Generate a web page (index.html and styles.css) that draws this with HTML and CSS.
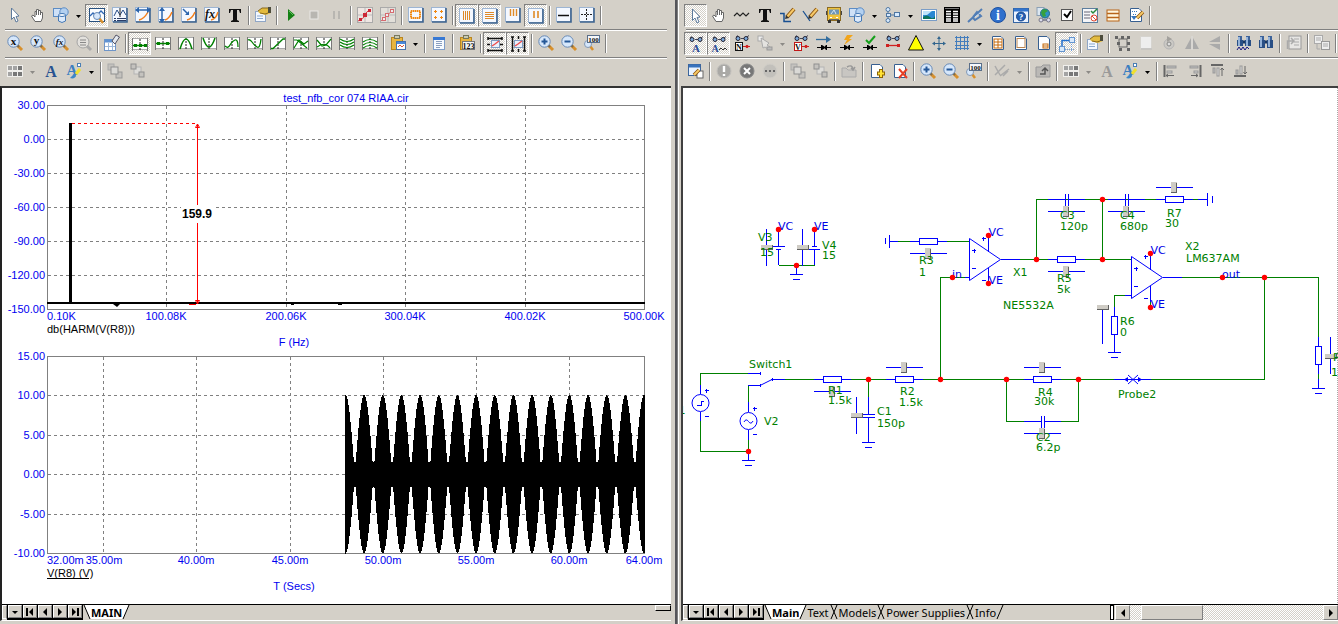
FILE: index.html
```html
<!DOCTYPE html>
<html lang="en">
<head>
<meta charset="utf-8">
<title>test_nfb_cor 074 RIAA.cir</title>
<link rel="stylesheet" href="styles.css">
</head>
<body>
<main class="workspace">
  <section class="pane pane-analysis" aria-label="Analysis">
    <div class="toolbars">
      <div class="toolbar" role="toolbar" data-bar="a1"></div>
      <div class="toolbar" role="toolbar" data-bar="a2"></div>
      <div class="toolbar" role="toolbar" data-bar="a3"></div>
    </div>
    <div class="document">
      <svg class="canvas plots" id="plots" viewBox="2 88 669 516" role="img" aria-label="Harmonic and transient plots"></svg>
      <div class="tabbar">
        <span class="grip"></span>
        <div class="nav" data-nav></div>
        <svg class="edge" viewBox="0 0 8 14"><path class="fill" d="M1 0H8V14H7z"/><path d="M1 0L7 14"/></svg>
        <button class="tab active">MAIN</button>
        <svg class="edge" viewBox="0 0 8 14"><path class="fill" d="M0 0H7L1 14H0z"/><path d="M7 0L1 14"/></svg>
        <span class="stretch"></span>
        <span class="split-handle"></span>
      </div>
    </div>
  </section>
  <div class="divider"></div>
  <section class="pane pane-schematic" aria-label="Schematic">
    <div class="toolbars">
      <div class="toolbar" role="toolbar" data-bar="s1"></div>
      <div class="toolbar" role="toolbar" data-bar="s2"></div>
      <div class="toolbar" role="toolbar" data-bar="s3"></div>
    </div>
    <div class="document">
      <svg class="canvas schematic" id="schematic" viewBox="683 88 655 516" role="img" aria-label="Circuit schematic"></svg>
      <div class="tabbar">
        <span class="grip"></span>
        <div class="nav" data-nav></div>
        <svg class="edge" viewBox="0 0 8 14"><path class="fill" d="M1 0H8V14H7z"/><path d="M1 0L7 14"/></svg>
        <button class="tab active">Main</button>
        <svg class="edge" viewBox="0 0 8 14"><path class="fill" d="M0 0H7L1 14H0z"/><path d="M7 0L1 14"/></svg>
        <button class="tab">Text</button>
        <svg class="edge wide" viewBox="0 0 10 14"><path d="M8 0L2 14M2 0L8 14"/></svg>
        <button class="tab">Models</button>
        <svg class="edge wide" viewBox="0 0 10 14"><path d="M8 0L2 14M2 0L8 14"/></svg>
        <button class="tab">Power Supplies</button>
        <svg class="edge wide" viewBox="0 0 10 14"><path d="M8 0L2 14M2 0L8 14"/></svg>
        <button class="tab">Info</button>
        <svg class="edge" viewBox="0 0 8 14"><path d="M7 0L1 14"/></svg>
        <span class="stretch"></span>
        <span class="scroll-split"></span>
        <div class="scrollbar">
          <button class="arrow" aria-label="Scroll left"><svg viewBox="0 0 8 8"><path d="M6 0V8L2 4z"/></svg></button>
          <span class="track"><span class="thumb"></span></span>
          <button class="arrow" aria-label="Scroll right"><svg viewBox="0 0 8 8"><path d="M2 0V8L6 4z"/></svg></button>
        </div>
      </div>
    </div>
  </section>
</main>
<script src="app.js"></script>
</body>
</html>
```

FILE: styles.css
```css
* { box-sizing: border-box; }
body {
  margin: 0;
  background: #d4d0c8;
  color: #000;
  font-family: "Liberation Sans", Arial, sans-serif;
  font-size: 11px;
}
button { margin: 0; padding: 0; border: 0; background: none; color: inherit; font: inherit; }
.workspace { display: grid; grid-template-columns: 675fr 4px 659fr; min-height: 100vh; }
.pane { min-width: 0; display: flex; flex-direction: column; background: #d4d0c8; overflow: hidden; }
.divider { border-left: 2px solid #55555a; border-right: 1px solid #fff; background: #808080; }

.toolbars { padding: 1px 8px 0 3px; height: 86px; }
.pane-schematic .toolbars { padding-left: 5px; padding-right: 0; }
.toolbar {
  display: flex;
  align-items: center;
  height: 28px;
  position: relative;
}
.toolbar:not(:last-child)::after {
  content: "";
  position: absolute;
  left: 2px;
  right: 0;
  bottom: -2px;
  height: 2px;
  background: linear-gradient(#808080 50%, #fff 50%);
}
.tool {
  flex: none;
  display: grid;
  place-items: center;
  width: 23px;
  height: 23px;
  border: 1px solid transparent;
}
.tool svg { display: block; width: 16px; height: 16px; overflow: visible; }
.tool.pressed {
  padding: 1px 0 0 1px;
  border-color: #808080 #fff #fff #808080;
  background: repeating-conic-gradient(#fff 0 25%, #d4d0c8 0 50%) 0 0 / 2px 2px;
}
.caret { flex: none; display: grid; place-items: center; width: 13px; height: 23px; }
.caret svg { width: 5px; height: 3px; margin-top: 2px; }
.sep { flex: none; width: 2px; height: 19px; margin: 0 1px 0 2px; border-left: 1px solid #808080; border-right: 1px solid #fff; }

.document { display: flex; flex-direction: column; margin: 0 4px 2px 0; border-top: 2px solid #333; border-left: 2px solid #222; border-bottom: 1px solid #fff; }
.pane-schematic .document { margin: 0 0 2px 2px; border-color: #404040 #fff #fff #404040; }
.canvas { display: block; width: 100%; height: auto; background: #fff; font-size: 11px; }
.canvas line, .canvas rect, .canvas polyline { shape-rendering: crispEdges; }

.plots text { fill: #0000f0; }
.plots .trace-name { fill: #000; }
.plots .measure { fill: #000; font-size: 12px; font-weight: bold; }
.frame { fill: none; stroke: #808080; }
.grid { stroke: #808080; stroke-dasharray: 3 3; }
.marker { stroke: #f00; fill: none; }

.schematic { font-family: "DejaVu Sans", Verdana, sans-serif; }
.schematic text { fill: #008000; }
.schematic .net { fill: #0000e6; }
.wire { fill: none; stroke: #008000; }
.part { fill: none; stroke: #00f; }
.body { fill: #fff; stroke: #00f; }
.dot { fill: #f00; }
.knob { fill: #cfccc5; }
.knob-edge { fill: none; stroke: #606060; }
.canvas .edge-strip { stroke: #a8a8a8; stroke-dasharray: 1 1; }

.tabbar { display: flex; height: 16px; border-top: 1px solid #000; background: #d4d0c8; font-family: "Noto Sans", Tahoma, sans-serif; }
.grip { flex: none; width: 5px; height: 14px; border: 1px solid #fff; border-right-color: #808080; }
.nav { flex: none; display: flex; gap: 1px; padding: 0 1px; background: #000; }
.nav button { width: 14px; height: 13px; border: 1px solid; border-color: #fff #808080 #808080 #fff; background: #d4d0c8; display: grid; place-items: center; }
.nav svg { width: 8px; height: 8px; }
.edge { flex: none; display: block; width: 8px; height: 14px; fill: none; stroke: #000; }
.edge.wide { width: 10px; }
.edge .fill { fill: #fff; stroke: none; }
.tab { flex: none; height: 14px; padding: 0; line-height: 13px; font-size: 11px; white-space: nowrap; }
.tab.active { background: #fff; font-weight: bold; }
.stretch { flex: 1; }
.split-handle { width: 16px; height: 6px; border: 1px solid; border-color: #fff #000 #000 #fff; background: #d4d0c8; }
.scroll-split { width: 4px; border: 1px solid #000; background: #fff; margin-right: 1px; }
.scrollbar { flex: 0 1 34%; display: flex; }
.arrow { flex: none; width: 15px; height: 15px; border: 1px solid; border-color: #fff #808080 #808080 #fff; display: grid; place-items: center; background: #d4d0c8; }
.arrow svg { width: 8px; height: 8px; }
.track { flex: 1; padding-left: 5%; background: repeating-conic-gradient(#fff 0 25%, #d4d0c8 0 50%) 0 0 / 2px 2px; }
.thumb { display: block; width: 34%; height: 15px; background: #d4d0c8; border: 1px solid; border-color: #fff #808080 #808080 #fff; }
```

FILE: app.js
```js
const p = (d, stroke, w = 1, fill = 'none') => `<path d="${d}" stroke="${stroke}" stroke-width="${w}" fill="${fill}"/>`;
const f = (d, fill) => `<path d="${d}" fill="${fill}"/>`;
const box = (x, y, w, h, fill, stroke = 'none') => `<rect x="${x}" y="${y}" width="${w}" height="${h}" fill="${fill}" stroke="${stroke}"/>`;
const ring = (x, y, r, fill, stroke) => `<circle cx="${x}" cy="${y}" r="${r}" fill="${fill}" stroke="${stroke}"/>`;
const glyph = (t, x, y, size, fill, extra = '') => `<text x="${x}" y="${y}" font-size="${size}" fill="${fill}" text-anchor="middle" font-family="Liberation Serif, serif" font-weight="bold" ${extra}>${t}</text>`;

const panel = box(.5, .5, 14, 14, '#f4f8ff', '#9db5d3') + p('M1 15H15V1', '#3d638f', 1.6);
const wave = box(.5, 2.5, 15, 11, '#fff', '#aaa') + p('M.5 2V15M15.5 2V15', '#777') + `<path d="M8 3V14" stroke="#222" stroke-dasharray="2 1"/>`;
const lens = (inner) => p('M10 10L15 15', '#d8902c', 3) + p('M10 10L12 12', '#7a6a50', 2) + ring(6.5, 6.5, 5.7, '#d6e7fb', '#6789b5') + inner;
const clip = box(1.5, 2.5, 11, 12, '#e8b541', '#b98520') + box(4.5, .5, 5, 3, '#c9c9b0', '#77775a');
const pencil = p('M7 10L14 2', '#8a5410', 4) + p('M7 10L14 2', '#f7c967', 2) + f('M5 12l1-4 3 3z', '#333');
const specs = p('M2 2L4 .5M15 .5L13 2M7 3.5H10', '#445') + ring(4, 3.5, 2, '#7eaadb', '#223') + ring(12, 3.5, 2, '#7eaadb', '#223');
const diode = p('M1 12.5H15M10.5 10V15M5.5 10V15', '#000') + f('M6 10L10 12.5L6 15zM10 10L8 12.5L10 15z', '#000');
const page = (x) => f('M2 1H11L14 4V15H2z', '#fff') + p('M2.5 1.5H11L13.5 4V14.5H2.5z', '#375f90') + x;
const shapes = box(.5, 1.5, 9, 8, '#cfe1f7', '#5c8cc4') + ring(11, 5, 4.2, '#b3d0f0', '#5c8cc4') + f('M5.500 8V14Q9 17 12.500 14V8z', '#dceafb') + p('M5.500 8V14Q9 17 12.500 14V8', '#4377b4') + `<ellipse cx="9" cy="8" rx="3.500" ry="1.500" fill="#f4f9ff" stroke="#4377b4"/>`;
const gridIcon = box(0, 2, 16, 12, '#f0efec') + [0, 1, 2].map(i => [0, 1].map(j => box(1 + i * 5, 3 + j * 5 + j, 4, 4, (i + j) > 1 ? '#777' : '#a3a3a3')).join('')).join('');
const colored = glyph('A', 6, 12, 15, '#3d7fc0') + box(11.500, .5, 3, 3, '#fff', '#4a7fb5') + p('M10 11L14 6', '#f0e02e', 3) + f('M4 15C7 16 10 15 10 12L8 11z', '#3c87c8');
const props = box(.5, 4.5, 10, 10, '#f3f8ff', '#8fa6c6') + p('M2 9H8M2 11.5H8', '#8ba9cf') + f('M3 4L7 1H13L16 0V6L11 8L7 7L4 6z', '#e3bb3f') + p('M3 4L7 1H13M5 6L10 7L13 6', '#8a6a1d') + box(13, 0, 3, 6, '#4c4c3c');
const binocs = box(2, 1, 4, 4, '#3d639a') + box(10, 1, 4, 4, '#3d639a') + box(1, 5, 6, 8, '#294f85') + box(9, 5, 6, 8, '#294f85') + p('M3 2V12M11 2V12', '#b6d2f2', 1.5) + p('M7 7H9', '#183762', 3);

const I = {
  arrow: f('M4.500 1L12 9L9 9.500L11 14L9 15L7 10L4.500 12.500z', '#fff') + p('M4.500 1L12 9L9 9.500L11 14L9 15L7 10L4.500 12.500z', '#5e7b9d'),
  hand: p('M5 14.500L1.500 9L3 8L5 10V4.500H6.500V8V2.500H8.500V8V3.500H10.500V8V5.500H12.500V11L11 14.500z', '#666', 1, '#fff'),
  shapes,
  zoombox: box(.5, .5, 15, 13, '#f9fcff', '#27507f') + p('M1 8L4 5L7 8L12 3L15 6', '#2f67b4', 1.3) + p('M10 10L14 15', '#d8902c', 2.500) + ring(8, 8, 3.500, '#d6e7fb', '#6789b5'),
  wavelist: panel + p('M2 9L5 3L8 8L11 3L14 8', '#284d85') + p('M8 1V10', '#222') + p('M2 11.500H4M5 11.500H14M2 13.500H4M5 13.500H14', '#2a3c66'),
  xscale: panel + p('M4 13Q9 12 13 5', '#f4801c', 1.500) + p('M2 3H14', '#2a64ad', 1.500) + f('M0 3L4 0V6zM16 3L12 0V6z', '#2a64ad'),
  yscale: panel + p('M7 13Q11 12 14 5', '#f4801c', 1.500) + p('M4 3V13', '#2a64ad', 1.500) + f('M4 0L7 4H1zM4 16L7 12H1z', '#2a64ad'),
  corner: panel + p('M6 13Q11 12 14 5', '#f4801c', 1.500) + p('M2 2L7 7', '#2a64ad', 1.500) + f('M8 4V8H4z', '#2a64ad'),
  fx: panel + p('M7 13Q12 12 14 5', '#f4801c', 1.500) + glyph('fx', 6, 11, 12, '#111', 'font-style="italic"'),
  text: f('M2 2H14V6H13L12 3H10V13L12 14V15H4V14L6 13V3H4L3 6H2z', '#101010'),
  props,
  run: f('M5 2L12 8L5 14z', '#138013') + p('M6 4L10 8', '#61bb61'),
  stop: box(4, 4, 8, 8, '#b8b6b1', '#e9e8e5'),
  pause: box(4, 4, 2, 8, '#b8b6b1') + box(9, 4, 2, 8, '#b8b6b1'),
  points: box(.5, .5, 15, 15, '#eee6e2', '#aaa') + p('M8 1V15M1 8H15', '#bbb') + p('M1 14Q7 12 8 8T14 3', '#d93a45') + box(6, 6, 4, 4, '#cc2735') + box(11, 2, 3, 3, '#cc2735') + box(2, 11, 3, 3, '#cc2735'),
  pointsOpen: box(.5, .5, 15, 15, '#e2dfd9', '#aaa') + p('M8 1V15M1 8H15', '#bbb') + p('M1 14L14 2', '#d66a70') + box(5.500, 6.500, 3, 3, '#eee', '#d66a70') + box(10.500, 2.500, 3, 3, '#eee', '#d66a70') + box(2.500, 10.500, 3, 3, '#eee', '#d66a70'),
  square: panel + box(3, 4, 9, 7, 'none', '#f18811') + `<rect x="3" y="4" width="9" height="7" fill="none" stroke="#f18811" stroke-width="2" stroke-dasharray="1 1"/>`,
  plus4: panel + p('M3 4.500H6M4.500 3V6M9 4.500H12M10.500 3V6M3 10.500H6M4.500 9V12M9 10.500H12M10.500 9V12', '#f18811'),
  bars4: panel + p('M4.500 3V12M6.500 3V12M8.500 3V12M10.500 3V12', '#df8a27'),
  rows4: panel + p('M3 4.500H12M3 6.500H12M3 8.500H12M3 10.500H12', '#df8a27'),
  bars3: panel + p('M5.500 2V9M8.500 2V9M11.500 2V9', '#df8a27', 1.400),
  bars2: panel + p('M6 3V10M10 3V10', '#df8a27', 1.600),
  hline: panel + p('M2 8.500H13', '#111', 1.500),
  cross: panel + `<path d="M2 7.500H14M7.500 2V13" stroke="#222" stroke-dasharray="2 1"/>`,
  zx: lens(glyph('x', 6.500, 10, 11, '#111')), zy: lens(glyph('y', 6.500, 9, 11, '#111')), zf: lens(glyph('fx', 6.500, 10, 9, '#111', 'font-style="italic"')),
  zeq: p('M10 10L15 15', '#aaa', 3) + ring(7, 7, 6, '#e3e1dd', '#a5a5a5') + p('M4 5H10M4 7.500H10M4 10H10', '#888'),
  eraser: box(.5, 4.500, 11, 11, '#fff', '#6f95c8') + p('M1 6H11', '#5f92d2', 3) + p('M4.500 8V15M8.500 8V15M1 11.500H11', '#9cb8da') + f('M8 6L12 0L16 2L11 9z', '#e3e8ee') + p('M8 6L12 0L15.500 2L11 9z', '#556'),
  c1: wave + p('M1 9.500H15', '#008000', 1.500) + box(2, 8, 3, 3, '#008000') + box(7, 8, 3, 3, '#008000') + box(12, 8, 3, 3, '#008000'),
  c2: wave + p('M1 8.500H15', '#008000', 1.500) + box(2, 7, 3, 3, '#008000') + box(11, 7, 3, 3, '#008000'),
  c3: wave + p('M2 14Q5 4 8 4T14 14', '#008000', 1.500),
  c4: wave + p('M2 3Q5 12 8 12T14 3', '#008000', 1.500),
  c5: wave + p('M1 11Q4 14 6 10T11 5T14 12', '#008000', 1.300),
  c6: wave + p('M1 5Q3 4 5 7T10 12T14 4', '#008000', 1.300),
  c7: wave + p('M1 13.500H3L13 4H15', '#008000', 1.300),
  c8: wave + p('M1 5H4L14 13M1 13L6 5L11 9L15 6', '#008000', 1.200),
  c9: wave + p('M1 5L6 11L10 10L15 4M1 12Q9 6 14 13', '#008000', 1.200),
  c10: wave + p('M1 4Q8 9 15 4M1 7Q8 12 15 7M1 10Q8 15 15 10', '#008000', 1.200),
  c11: wave + p('M1 7Q8 2 15 7M1 10Q8 5 15 10M1 13Q8 8 15 13', '#008000', 1.200),
  clipwave: clip + box(6.500, 6.500, 9, 8, '#fff', '#4672ae') + p('M7 8H15', '#4c8adb', 2) + p('M8 12L10 10L12 12L14 10', '#dc5635'),
  list: box(2.500, 2.500, 11, 12, '#f7fbff', '#7e9dc8') + p('M2 3.500H14', '#3879d4', 3) + p('M5 6.500H11M5 8.500H11M5 10.500H11M5 12.500H9', '#8a9fc0'),
  clip123: clip + box(3.500, 6.500, 12, 8, '#f4f4f4', '#777') + glyph('123', 9.500, 14, 8, '#111'),
  fith: p('M1 2.500H15M1 14.500H15M1 1V4M15 1V4M1 13V16M15 13V16M0 8.500H3M13 8.500H16', '#111', 1.500) + box(4.500, 4.500, 8, 7, '#eaf1fc', '#7e9cc2') + p('M5 10L8 8L12 5', '#ef4f4f', 1.500),
  fitv: p('M2.500 1V15M14.500 1V15M1 1H4M13 1H16M1 15H4M13 15H16M8.500 0V3M8.500 13V16', '#111', 1.500) + box(4.500, 4.500, 8, 7, '#eaf1fc', '#7e9cc2') + p('M5 10L8 8L12 5', '#ef4f4f', 1.500),
  zin: lens(p('M3.500 6.500H9.500M6.500 3.500V9.500', '#245797', 2)), zout: lens(p('M3.500 6.500H9.500', '#245797', 2)),
  z100: p('M6 11L9 15', '#d8902c', 2.500) + ring(4, 9, 3.500, '#d6e7fb', '#8298b5') + box(3.500, .5, 12, 7, '#f5f8fc', '#5a6e88') + glyph('100', 9.500, 7, 7, '#111'),
  grid: gridIcon, fontA: glyph('A', 8, 14, 16, '#285291'), fontAgray: glyph('A', 8, 14, 16, '#999'), colored,
  front: box(1, 1, 6, 6, '#c4c2be', '#aaa') + box(9, 9, 6, 6, '#c4c2be', '#999') + box(4, 4, 7, 7, '#dad9d6', '#8f8f8f'),
  back: box(4, 4, 7, 7, '#dddcd9', '#b4b4b4') + box(1, 1, 5, 5, '#c4c2be', '#8f8f8f') + box(9, 9, 5, 5, '#c4c2be', '#8f8f8f'),
  zigzag: p('M0 9L3 6L6 9L9 6L12 9L15 6', '#222', 1.200),
  wirepen: p('M0 6.500H4V14.500H11', '#184f91', 1.500) + pencil, linepen: p('M0 4L7 14', '#184f91', 1.300) + pencil,
  bus: box(1.500, .5, 13, 13, '#f0c23c', '#8a6a22') + box(3, 2.500, 10, 5, '#6e95b5') + p('M5 7L8 3L10 7', '#d9e8f2') + box(0, 4, 1, 4, '#444') + box(15, 4, 1, 4, '#444') + box(2, 13, 3, 3, '#333') + box(11, 13, 3, 3, '#333') + p('M4 10.500H6M10 10.500H12', '#fff') + p('M3 12.500H13', '#666'),
  flow: p('M3 3V13M3 8H9', '#5178a3') + ring(3, 2.500, 2, '#d8ebff', '#5178a3') + box(1.500, 6.500, 4, 3, '#d8ebff', '#5178a3') + ring(3, 13.500, 2, '#d8ebff', '#5178a3') + box(9.500, 5.500, 5, 4, '#d8ebff', '#5178a3'),
  picture: box(.5, 2.500, 15, 11, '#fff', '#7a9dc7') + box(2, 4, 12, 8, '#2a87d2') + f('M2 12V10Q6 7 9 10T14 9V12z', '#0b755f') + f('M2 4H11L6 8H2z', '#bfe4fb'),
  table: box(.5, .5, 15, 15, '#000', '#000') + p('M1 1.500H15', '#777') + p('M2 4.500H7M9 4.500H14M2 7H7M9 7H14M2 9.500H7M9 9.500H14M2 12H7M9 12H14M2 14H7M9 14H14', '#fff', 1.400),
  clipline: p('M1 15L15 2M6 10L10 5L14 9L8 13L5 10', '#527eb6', 2) + p('M8 10L13 6', '#c6dcf2'),
  info: ring(8, 8, 7.500, '#2f70cd', '#1d51a2') + glyph('i', 8, 13, 14, '#fff'),
  help: box(.5, 1.500, 15, 14, '#eaf2ff', '#3465a4') + p('M1 3H15', '#3375ce', 3) + ring(8, 9.500, 4.500, '#2360b6', '#1c4a8e') + glyph('?', 8, 13, 9, '#fff'),
  globe: box(1, .5, 7, 8, '#dbe6f0', '#8ba0b5') + ring(9, 6.500, 4.500, '#2f91c5', '#1e6a85') + f('M6 3Q9 1 12 4L9 6L10 9L7 10L5 6z', '#37a13d') + p('M4 13H13', '#778', 1.500) + ring(5, 13, 2, '#dde', '#778') + ring(12.500, 13, 2, '#dde', '#778'),
  check: box(2.500, 2.500, 11, 11, '#fff', '#555') + p('M5 7L8 10L12 4', '#000', 2),
  checklist: box(.5, 1.500, 15, 14, '#f5f6f9', '#5d7e9e') + p('M2 5H8M2 8H8M2 11H8', '#667') + p('M9 4L11 6L15 2', '#278a3c', 1.500) + ring(12, 11, 3, '#fff', '#df4933') + p('M10 9L14 13', '#df4933'),
  rows: box(2, 3, 12, 11, '#fff7df', '#b86519') + p('M2 6.500H14M2 10.500H14', '#b86519', 1.400),
  pageedit: page(`<path d="M4 4.500H9M5 7.500H9" stroke="#3675bd" stroke-dasharray="1 1"/>`) + f('M3 9H9L6 13z', '#3675bd') + p('M9 11L15 5', '#8a5410', 3.500) + p('M9 11L15 5', '#f7c967', 2),
  seeA: specs + glyph('A', 8, 16, 11, '#294a96'), seeW: specs + glyph('A', 4, 16, 10, '#294a96') + p('M8 14L10 12L12 14L14 12L16 14', '#333'),
  seeN: specs + box(1.500, 7.500, 7, 8, '#fff', '#111') + glyph('N', 5, 14.500, 8, '#111') + p('M9 11.500H16', '#d02020') + ring(13, 11.500, 1.200, '#d02020', '#d02020'),
  seeV: specs + box(1.500, 7.500, 7, 8, '#fff', '#c01818') + glyph('V', 5, 14.500, 8, '#111') + p('M9 11.500H16', '#d02020') + ring(13, 11.500, 1.200, '#d02020', '#d02020'),
  copygray: box(1, 1, 5, 5, '#eee', '#aaa') + f('M4 3L12 8L10 10L13 12L11 14L8 12L6 13z', '#e4e3e0') + p('M4 3L12 8L10 10L13 12L11 14L8 12L6 13z', '#aaa') + box(10, 12, 5, 3, '#bbb', '#999'),
  current: p('M0 4.500H12', '#336d9e', 1.300) + f('M10 1L15 4.500L10 8z', '#336d9e') + diode,
  power: f('M8 0H14L10 4H13L5 10L8 5H5z', '#f2a51b') + diode, ok: p('M4 5L7 8L13 1', '#15a01c', 2) + diode,
  pin: specs + p('M1 10.500H15', '#d02020', 1.300) + box(1, 9, 3, 3, '#d02020') + box(12, 9, 3, 3, '#d02020'),
  warn: p('M8 .5L15.500 15H.5z', '#111', 1, '#ff0'),
  move: p('M8 3V14M2 8.500H14', '#33668e') + f('M8 1L10 4H6zM8 16L10 13H6zM1 8.500L4 6.500V10.500zM15 8.500L12 6.500V10.500z', '#33668e'),
  mesh: p('M2.500 1V15M6.500 1V15M10.500 1V15M13.500 1V15M1 2.500H15M1 6.500H15M1 10.500H15M1 13.500H15', '#447dbc'),
  pgTable: page(box(4, 4, 8, 9, '#fff', '#c66b0d') + p('M4 7H12M4 10H12M8 4V13', '#c66b0d')), pgFrame: page(box(4, 3.500, 8, 9, 'none', '#bb8550')), pgForm: page(box(7, 9, 5, 4, '#fff', '#c66b0d') + p('M7 11H12', '#c66b0d')),
  nodes: p('M3 12V4.500H12', '#2570cd', 1.500) + box(10.500, 1.500, 5, 5, '#d9e9fb', '#6596d0') + box(.5, 10.500, 5, 5, '#d9e9fb', '#6596d0') + `<path d="M6 13.500H15M12.500 8V15" stroke="#75a0d8" stroke-dasharray="1 1"/>`,
  sel: box(4, 4, 8, 8, 'none', '#666') + [[0, 1], [6, 1], [12, 1], [2, 7], [12, 7], [4, 13], [12, 13]].map(q => box(q[0], q[1], 3, 3, '#656565')).join(''),
  blank: box(2.500, 1.500, 11, 12, '#eee', '#d6d4cf') + p('M3 14H14', '#bbb'), rotate: ring(8, 9, 5, '#cbc9c5', '#b4b4b4') + ring(8, 9, 2, '#ddd', '#888') + f('M6 1L11 4L6 7z', '#a3a19d'),
  flipx: f('M7 3V14H1zM9 3V14H15z', '#aaa') + p('M8 1V15', '#ddd'), flipy: f('M13 1V7H2zM13 9V15L2 9z', '#aaa'),
  findwave: `<g transform="translate(1 0)">${binocs}</g>` + box(0, 11, 16, 5, '#d4d0c8') + p('M2 15L4 12L6 15L8 12L10 15L12 12L14 14', '#161681'), find: binocs,
  notes: box(3, 1, 12, 13, '#e7e6e4', '#999') + p('M8 4H13M8 7H13M8 10H13', '#aaa') + p('M1.500 14V6H7M5 3L8 6L5 9', '#aaa', 1.500),
  pasteGray: box(.5, .5, 8, 8, '#eee', '#aaa') + box(7.500, 6.500, 8, 8, '#eee', '#999') + p('M2 3H7M2 5H7M9 9H14M9 11H14M3 9V14H6', '#aaa'),
  formedit: box(.5, 1.500, 12, 11, '#e8f2ff', '#3c659c') + p('M1 3H12', '#3772bd', 3) + box(9, 8, 6, 7, '#fff', '#666') + p('M6 12L11 7', '#8a5410', 3.500) + p('M6 12L11 7', '#f7c967', 2),
  bang: ring(8, 8, 7, '#aaa9a6', '#c3c1bd') + p('M8 3V9M8 11V13', '#fff', 2.400), stopx: ring(8, 8, 7, '#777', '#8a8a8a') + p('M5 5L11 11M11 5L5 11', '#fff', 2), dots: ring(8, 8, 7, '#c2c0bb', '#d0cec8') + p('M3 8H5M7 8H9M11 8H13', '#666', 2),
  folder: f('M1 5H5L7 7H15V14H1z', '#c8c6c2') + p('M1 5H5L7 7H15V14H1z', '#aaa') + p('M6 4Q11 1 12 6M10 5L12 7L14 4', '#999', 1.500),
  pgadd: page('') + p('M12 6V15M8 10.500H16', '#8c6505', 4) + p('M12 7V14M9 10.500H15', '#ffe235', 2), pgdel: page('') + p('M7 6L15 15M15 6L7 15', '#e53e24', 2),
  clipgray: p('M1 3L6 12M1 12L11 2M6 13L15 6M9 13L14 8', '#aaa', 1.500), foldup: f('M1 4H6L8 2H15V14H1z', '#bbb9b6') + p('M1 4H6L8 2H15V14H1z', '#999') + p('M5 11H10V6M7 8L10 5L13 8', '#555', 1.500),
  alignL: p('M1.500 2V14', '#666', 2) + box(4, 3, 9, 2, '#bbb', '#999') + box(4, 8, 5, 2, '#ccc', '#999') + p('M3 12.500H11M5 11L3 12.500L5 14', '#666'),
  alignR: p('M14.500 2V14', '#666', 2) + box(4, 3, 8, 2, '#bbb', '#999') + box(8, 8, 4, 2, '#ccc', '#999') + p('M5 12.500H12M10 11L12 12.500L10 14', '#666'),
  alignT: p('M2 2H14', '#666', 2) + box(4, 5, 2, 5, '#bbb', '#999') + box(8, 5, 2, 8, '#ddd', '#999') + p('M13 13V5M11.500 7L13 5L15 7', '#666'),
  alignB: p('M2 13H14', '#666', 2) + box(4, 7, 2, 4, '#bbb', '#999') + box(8, 3, 2, 8, '#ddd', '#999') + p('M13 3V11M11.500 9L13 11L15 9', '#666')
};

// "|" separator, "v" menu caret, "g" disabled caret, leading "*" pressed button
const bars = {
  a1: 'arrow hand shapes v *zoombox wavelist xscale yscale corner fx text | props | run stop pause | points pointsOpen | square plus4 | *bars4 *rows4 bars3 *bars2 | hline cross |',
  a2: 'zx zy zf zeq | eraser | *c1 c2 c3 c4 c5 c6 c7 c8 c9 c10 c11 | clipwave v | list | clip123 | *fith *fitv | zin zout z100 |',
  a3: 'grid g fontA colored v | front back',
  s1: '*arrow hand zigzag text wirepen linepen bus shapes v flow v picture table clipline info help globe check checklist rows pageedit |',
  s2: '*seeA *seeW seeN copygray g seeV current power ok pin warn move mesh v pgTable pgFrame pgForm *nodes | props | sel blank rotate flipx flipy | findwave find | notes | pasteGray |',
  s3: 'formedit | bang stopx dots | front back | folder | pgadd pgdel | zin zout z100 | clipgray g | foldup | grid g fontAgray colored v | alignL alignR alignT alignB'
};
const caret = fill => `<span class="caret"><svg viewBox="0 0 5 3"><path d="M0 0H5L2.500 3z" fill="${fill}"/></svg></span>`;
document.querySelectorAll('[data-bar]').forEach(el => {
  el.innerHTML = bars[el.dataset.bar].split(' ').map(t => {
    if (t === '|') return '<span class="sep"></span>';
    if (t === 'v') return caret('#000');
    if (t === 'g') return caret('#8c8a86');
    const on = t[0] === '*', name = on ? t.slice(1) : t;
    return `<button class="tool${on ? ' pressed' : ''}" aria-label="${name}" aria-pressed="${on}"><svg viewBox="0 0 16 16">${I[name]}</svg></button>`;
  }).join('');
});

const navs = [['Menu', 'M1 3H7L4 6z'], ['First', 'M0 0H2V8H0zM7 0V8L3 4z'], ['Previous', 'M6 0V8L2 4z'], ['Next', 'M2 0V8L6 4z'], ['Last', 'M1 0V8L5 4zM6 0H8V8H6z']];
document.querySelectorAll('[data-nav]').forEach(el => {
  el.innerHTML = navs.map(n => `<button aria-label="${n[0]}"><svg viewBox="0 0 8 8"><path d="${n[1]}"/></svg></button>`).join('');
});

const line = (x1, y1, x2, y2, c) => `<line x1="${x1}" y1="${y1}" x2="${x2}" y2="${y2}" class="${c}"/>`;
const label = (t, x, y, c = '', anchor = 'start') => `<text x="${x}" y="${y}" class="${c}" text-anchor="${anchor}">${t}</text>`;

function plots() {
  let s = '';
  [139.5, 173.5, 207.5, 241.5, 275.5].forEach(y => s += line(48, y, 644, y, 'grid'));
  [166.5, 286.5, 405.5, 525.5].forEach(x => s += line(x, 106, x, 309, 'grid'));
  [395.5, 435.5, 474.5, 514.5].forEach(y => s += line(48, y, 644, y, 'grid'));
  [103.5, 196.5, 290.5, 383.5, 476.5, 569.5].forEach(x => s += line(x, 357, x, 553, 'grid'));
  s += '<rect class="frame" x="47.5" y="105.5" width="597" height="204"/><rect class="frame" x="47.5" y="356.5" width="597" height="197"/>';
  ['30.00', '0.00', '-30.00', '-60.00', '-90.00', '-120.00', '-150.00'].forEach((t, i) => s += label(t, 45, 109 + i * 34, '', 'end'));
  ['15.00', '10.00', '5.00', '0.00', '-5.00', '-10.00'].forEach((t, i) => s += label(t, 45, [360, 399, 439, 478, 518, 557][i], '', 'end'));
  s += label('0.10K', 47, 320);
  [['100.08K', 166], ['200.06K', 286], ['300.04K', 405], ['400.02K', 525], ['500.00K', 644]].forEach(q => s += label(q[0], q[1], 320, '', 'middle'));
  s += label('32.00m', 47, 564);
  [['35.00m', 104], ['40.00m', 196], ['45.00m', 290], ['50.00m', 383], ['55.00m', 476], ['60.00m', 569], ['64.00m', 644]].forEach(q => s += label(q[0], q[1], 564, '', 'middle'));
  s += label('test_nfb_cor 074 RIAA.cir', 346, 102, '', 'middle') + label('F (Hz)', 294, 346, '', 'middle') + label('T (Secs)', 294, 590, '', 'middle');
  s += label('db(HARM(V(R8)))', 47, 333, 'trace-name') + label('V(R8) (V)', 47, 577, 'trace-name') + '<rect x="47" y="578" width="42" height="1"/>';
  s += '<rect x="69" y="123" width="3" height="180"/><rect x="47" y="302" width="598" height="2"/><path d="M113 304h7l-3 3z"/><rect x="291" y="304" width="3" height="1"/><rect x="338" y="304" width="4" height="1"/>';
  s += '<line x1="72" y1="123.5" x2="197" y2="123.5" class="marker" stroke-dasharray="3 3"/>' + line(197.5, 124, 197.5, 205, 'marker') + line(197.5, 223, 197.5, 304, 'marker');
  s += '<path class="marker" d="M195.500 127.500L197.500 124L199.500 127.500zM195.500 300.500L197.500 304L199.500 300.500z"/>' + line(189, 304.5, 196, 304.5, 'marker');
  s += '<rect x="181" y="206" width="32" height="16" fill="#fff"/>' + label('159.9', 197, 218, 'measure', 'middle');
  const top = [], bottom = [];
  for (let x = 345; x < 645; x++) {
    const a = Math.max(Math.abs(Math.cos(Math.PI * (x - 345) / 18.66)), .16);
    const hi = Math.round(474.5 - 79.5 * a), lo = Math.round(474.5 + 79 * a);
    top.push(`${x},${hi}`, `${x + 1},${hi}`);
    bottom.unshift(`${x + 1},${lo}`, `${x},${lo}`);
  }
  return s + `<polygon points="${top.concat(bottom).join(' ')}" shape-rendering="crispEdges"/>`;
}

const wire = pts => `<polyline class="wire" points="${pts}"/>`;
const part = pts => `<polyline class="part" points="${pts}"/>`;
const dot = (x, y) => `<circle class="dot" cx="${x}" cy="${y}" r="2.700"/>`;
const sliderH = (x, y) => part(`${x},${y} ${x + 37},${y}`) + `<rect class="knob" x="${x + 15}" y="${y - 5.5}" width="6" height="10"/><polyline class="knob-edge" points="${x + 15},${y + 5} ${x + 20.5},${y + 5} ${x + 20.5},${y - 5}"/>`;
const sliderV = (x, y, k) => part(`${x},${y} ${x},${y + 37}`) + `<rect class="knob" x="${x - 5.5}" y="${k}" width="11" height="4"/><polyline class="knob-edge" points="${x - 5.5},${k + 4.5} ${x + 5.5},${k + 4.5} ${x + 5.5},${k}"/>`;
const resH = (x, y) => part(`${x},${y} ${x + 37},${y}`) + `<rect class="body" x="${x + 9.5}" y="${y - 3}" width="18" height="6"/>`;
const resV = (x, y) => part(`${x},${y} ${x},${y + 37}`) + `<rect class="body" x="${x - 3}" y="${y + 9.5}" width="6" height="18"/>`;
const capH = (x, y) => part(`${x},${y} ${x + 17.5},${y}`) + part(`${x + 20.5},${y} ${x + 37},${y}`) + part(`${x + 17.5},${y - 6} ${x + 17.5},${y + 6}`) + part(`${x + 20.5},${y - 6} ${x + 20.5},${y + 6}`);
const ground = (x, y) => part(`${x - 6.5},${y} ${x + 6.5},${y}`) + part(`${x - 3.5},${y + 5} ${x + 3.5},${y + 5}`);
const plus = (x, y) => part(`${x - 2},${y} ${x + 2},${y}`) + part(`${x},${y - 2} ${x},${y + 2}`);
const minus = (x, y) => part(`${x - 2},${y} ${x + 2},${y}`);
const opamp = (x, y, ve) => `<path class="part" d="M${x} ${y - 21}L${x + 31} ${y}L${x} ${y + 21}z"/>` + part(`${x + 31},${y} ${x + 50},${y}`) + plus(x + 4.5, y - 9) + minus(x + 4.5, y + 9) + plus(x + 14, y - 21) + minus(x + 14, y + 21)
  + part(`${x + 19},${y - 24} ${x + 19},${y - 8}`) + wire(`${x + 19},${y + 24} ${x + 19},${ve}`) + part(`${x + 19},${y + 8} ${x + 19},${y + 24}`) + dot(x + 19, y - 24) + dot(x + 19, ve) + label('VC', x + 19, y - 24, 'net') + label('VE', x + 19, ve, 'net');

function schematic() {
  let s = wire('748,373.5 700.5,373.5 700.5,385') + wire('700.5,421 700.5,451.5 748.5,451.5 748.5,440') + wire('748.5,402 748.5,385.5')
    + wire('785,379.5 1264.5,379.5 1264.5,277.5') + wire('868.5,379 868.5,397') + wire('940.5,379.5 940.5,277.5 966,277.5') + wire('1006.5,379 1006.5,421.5 1024,421.5') + wire('1061,421.5 1078.5,421.5 1078.5,379')
    + wire('778.5,265.5 814.5,265.5') + wire('889,241.5 969,241.5') + wire('1019,259.5 1131,259.5') + wire('1036.5,259.5 1036.5,199.5 1198,199.5') + wire('1102.5,199.5 1102.5,259.5') + wire('1114.5,307 1114.5,295.5 1125,295.5') + wire('1181,277.5 1318.5,277.5 1318.5,380');
  s += part('748,373.5 761,373.5') + part('748,385.5 760,385.5') + part('760.5,372 760.5,375') + part('760.5,384 760.5,387') + '<path class="part" d="M760 385.500L772 379.500"/>' + part('772.5,378 772.5,381') + part('771,379.5 785,379.5');
  s += part('700.5,385 700.5,394') + part('700.5,412 700.5,421') + '<circle class="part" cx="700.500" cy="403" r="8.500"/>' + part('697,405.5 701.5,405.5 701.5,401.5 704,401.5') + plus(706.5, 390.5) + minus(706.5, 416.5);
  s += part('748.5,402 748.5,412') + part('748.5,430 748.5,440') + '<circle class="part" cx="748.500" cy="421" r="8.500"/><path class="part" d="M744 422Q746 418 748.500 421.500T753 421"/>' + plus(754.5, 408.5) + minus(754.5, 434.5);
  s += part('748.5,451 748.5,460') + ground(748.5, 460.5) + part('868.5,397 868.5,414') + part('862,414.5 875,414.5') + part('862,417.5 875,417.5') + part('868.5,417 868.5,442') + ground(868.5, 442.5);
  s += resH(814, 379.5) + resH(886, 379.5) + resH(1024, 379.5) + resH(910, 241.5) + resH(1048, 259.5) + resH(1156, 199.5) + capH(1048, 199.5) + capH(1108, 199.5) + capH(1024, 421.5);
  s += resV(1114.5, 306.5) + part('1114.5,343 1114.5,352') + ground(1114.5, 352.5) + resV(1318.5, 336.5) + part('1318.5,379 1318.5,388') + ground(1318.5, 388.5);
  s += part('778.5,229 778.5,246') + part('773,246.5 785,246.5') + part('776,249.5 781,249.5') + part('778.5,249 778.5,265') + part('814.5,229 814.5,246') + part('812,246.5 817,246.5') + part('808,249.5 820,249.5') + part('814.5,249 814.5,265') + part('796.5,265 796.5,274') + ground(796.5, 274.5);
  s += part('889,241.5 898,241.5') + part('889.5,235 889.5,248') + part('885.5,238 885.5,244') + part('1198,199.5 1207,199.5') + part('1207.5,193 1207.5,206') + part('1212.5,196 1212.5,203') + part('965,277.5 970,277.5') + part('1125,295.5 1131,295.5');
  s += opamp(969.5, 259.5, 283.5) + opamp(1131.5, 277.5, 307.5);
  s += part('1114,379.5 1151,379.5') + '<path class="part" d="M1128 375L1138 384M1138 375L1128 384"/><path d="M1124 379.500l4-2.500v5zM1142 379.500l-4-2.500v5z" fill="#00f"/>';
  s += sliderH(814, 391.5) + sliderH(886, 367.5) + sliderH(1024, 367.5) + sliderH(1024, 433.5) + sliderH(910, 253.5) + sliderH(1048, 211.5) + sliderH(1108, 211.5) + sliderH(1156, 187.5) + sliderH(1048, 271.5);
  s += sliderV(856.5, 397, 413) + sliderV(766.5, 229, 245) + sliderV(802.5, 229, 245) + sliderV(1102.5, 307, 305) + sliderV(1330.5, 337, 354);
  [['Switch1', 749, 368], ['R1', 828, 394], ['1.5k', 828, 404], ['V2', 764, 425], ['R2', 900, 395], ['1.5k', 899, 406], ['C1', 877, 415], ['150p', 877, 427], ['V1', 671, 414], ['V3', 758, 241], ['15', 760, 256], ['V4', 822, 249], ['15', 822, 259], ['R3', 919, 264], ['1', 919, 276], ['X1', 1013, 276], ['NE5532A', 1003, 309], ['C3', 1060, 219], ['120p', 1060, 230], ['C4', 1120, 219], ['680p', 1120, 230], ['R7', 1167, 217], ['30', 1165, 227], ['R5', 1057, 282], ['5k', 1057, 293], ['X2', 1185, 250], ['LM637AM', 1186, 262], ['R6', 1120, 325], ['0', 1120, 336], ['R8', 1333, 361], ['1', 1331, 376], ['R4', 1038, 396], ['30k', 1034, 405], ['C2', 1036, 441], ['6.2p', 1036, 451], ['Probe2', 1118, 398]].forEach(q => s += label(...q));
  [['VC', 778, 230], ['VE', 814, 230], ['in', 952, 278], ['out', 1222, 278]].forEach(q => s += label(...q, 'net'));
  [[748.5, 451.5], [868.5, 379.5], [940.5, 379.5], [1006.5, 379.5], [1078.5, 379.5], [778.5, 229.5], [814.5, 229.5], [796.5, 265.5], [952.5, 277.5], [1036.5, 259.5], [1102.5, 259.5], [1102.5, 199.5], [1222.5, 277.5], [1264.5, 277.5]].forEach(q => s += dot(...q));
  return s + line(1337.5, 88, 1337.5, 604, 'edge-strip');
}
document.getElementById('plots').innerHTML = plots();
document.getElementById('schematic').innerHTML = schematic();
```
